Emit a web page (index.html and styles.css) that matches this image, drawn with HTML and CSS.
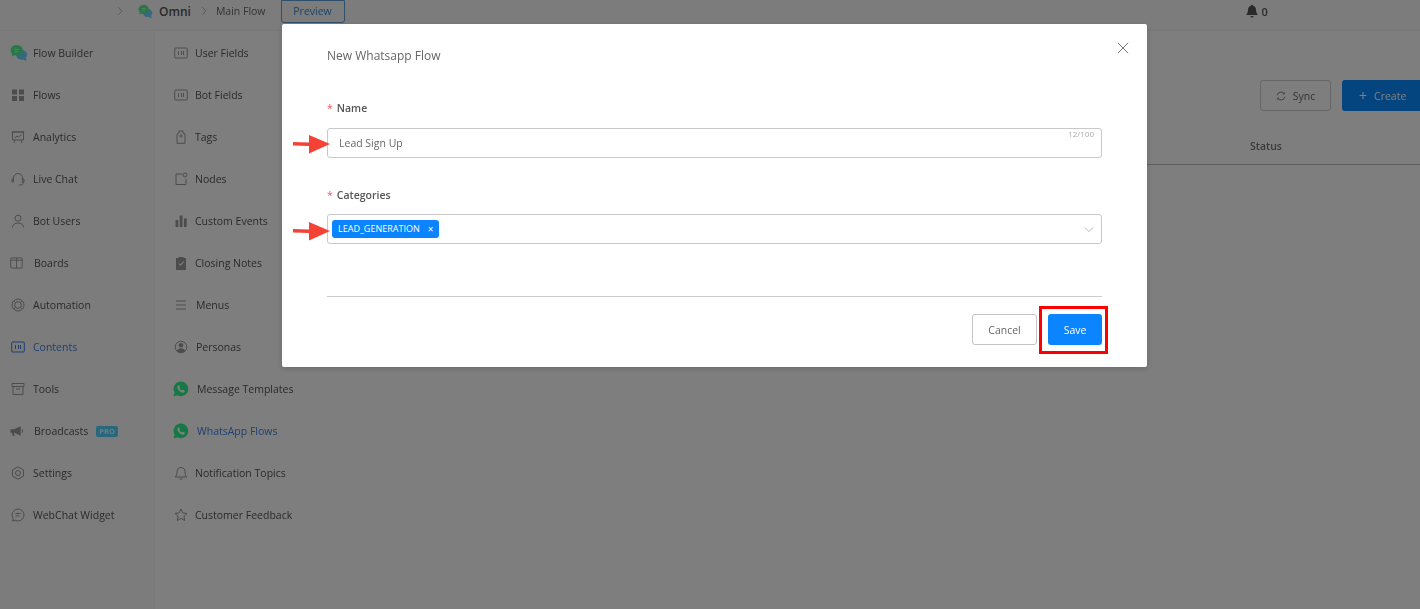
FILE: index.html
```html
<!DOCTYPE html>
<html lang="en">
<head>
<meta charset="utf-8">
<title>New Whatsapp Flow</title>
<link rel="stylesheet" href="styles.css">
</head>
<body>
<svg class="defs" width="0" height="0" aria-hidden="true">
  <symbol id="bubbles" viewBox="0 0 20 20">
    <path fill="#70d0ff" d="M12 6.500a6 5.500 0 0 1 5.500 9l1 3.500-4-1.800A6 5.500 0 1 1 12 6.500z"/>
    <path fill="#50f090" d="M7.500 1a6.800 6 0 0 1 0 12q-1.300 0-2.400-.4L1.800 14l.6-3A6.800 6 0 0 1 7.500 1z"/>
    <path stroke="#dff3e3" stroke-width="1" d="M5 6h5M5 8.500h4"/>
  </symbol>
  <symbol id="field" viewBox="0 0 14 14">
    <rect x=".7" y="2" width="12.600" height="10" rx="1" fill="none" stroke="currentColor"/>
    <path fill="none" stroke="currentColor" d="M4.500 5v4M7.500 5v4M9.500 5v4"/>
  </symbol>
  <symbol id="whatsapp" viewBox="0 0 16 16">
    <path fill="#2cf088" d="M8 .6a7.300 7.300 0 0 1 0 14.600c-1.300 0-2.500-.3-3.600-.9L.5 15.400l1.100-3.800A7.300 7.300 0 0 1 8 .6z"/>
    <path fill="#fff" d="M5.700 4.200c.3 0 .5 0 .6.300l.6 1.400c.1.200 0 .4-.1.600l-.5.600c.6 1.100 1.400 1.900 2.600 2.500l.7-.8c.1-.2.300-.2.500-.1l1.400.7c.2.100.3.300.3.500-.1 1.200-1 1.800-2 1.800-2.700-.3-5.300-3-5.500-5.500 0-1.100.6-2 1.400-2z"/>
  </symbol>
</svg>

<div class="page">
  <header class="topbar">
    <svg class="crumb-chev first" viewBox="0 0 8 12"><path d="M1.500 1l5 5-5 5"/></svg>
    <svg class="brand-icon"><use href="#bubbles"/></svg>
    <span class="brand">Omni</span>
    <svg class="crumb-chev" viewBox="0 0 8 12"><path d="M1.500 1l5 5-5 5"/></svg>
    <span class="crumb">Main Flow</span>
    <span class="preview">Preview</span>
    <span class="bell">
      <svg class="bell-icon" viewBox="0 0 14 14"><path fill="currentColor" d="M7 .8c.6 0 1 .4 1 .9 2 .5 3 2.100 3 4.100 0 2 .5 3.200 1.500 4.400v.8h-11v-.8C2.500 9 3 7.800 3 5.800c0-2 1-3.600 3-4.100 0-.5.400-.9 1-.9zM5.500 12h3a1.500 1.500 0 0 1-3 0z"/></svg>
      0
    </span>
  </header>

  <div class="body">
    <nav class="nav primary">
      <a class="item"><span class="ic"><svg class="i18"><use href="#bubbles"/></svg></span>Flow Builder</a>
      <a class="item"><span class="ic"><svg class="i14" viewBox="0 0 14 14"><path fill="currentColor" d="M1 1.500h5v5H1zM8 1.500h5v5H8zM1 8h5v5H1zM8 8h5v5H8z"/></svg></span>Flows</a>
      <a class="item"><span class="ic"><svg class="i14 line" viewBox="0 0 14 14"><path d="M1.500 2h11v8h-11zM.8 2h12.400M4 10l-1 3M10 10l1 3M3.500 8l2.500-2 1.500 1L10.500 4.500"/></svg></span>Analytics</a>
      <a class="item"><span class="ic"><svg class="i14 line" viewBox="0 0 14 14"><path d="M2.500 8V6a4.500 4.500 0 0 1 9 0v2M1 7h1.500v3H1zM11.500 7H13v3h-1.500zM12 10v1.500c0 .8-1 1.500-2 1.500H8"/></svg></span>Live Chat</a>
      <a class="item"><span class="ic"><svg class="i14 line" viewBox="0 0 14 14"><circle cx="7" cy="4.200" r="3"/><path d="M1.500 13.500c0-3 2.500-4.500 5.500-4.500s5.500 1.500 5.500 4.500"/></svg></span>Bot Users</a>
      <a class="item"><span class="ic"><svg class="i14 wide line" viewBox="0 0 14 14"><rect x=".8" y="1.500" width="12.400" height="11" rx="1"/><path d="M7 1.500v11M.8 4h12.400"/></svg></span><span class="shift">Boards</span></a>
      <a class="item"><span class="ic"><svg class="i14 line" viewBox="0 0 14 14"><circle cx="7" cy="7" r="6"/><circle cx="7" cy="7" r="3.300"/><path d="M3 3l1.800 1.800M11 3L9.200 4.800M3 11l1.800-1.800M11 11L9.200 9.200"/></svg></span>Automation</a>
      <a class="item active"><span class="ic"><svg class="i14"><use href="#field"/></svg></span>Contents</a>
      <a class="item"><span class="ic"><svg class="i14 line" viewBox="0 0 14 14"><path d="M1 1.500h12v3H1zM2 4.500v8h10v-8M5 7h4"/></svg></span>Tools</a>
      <a class="item"><span class="ic"><svg class="i14 wide" viewBox="0 0 14 14"><path fill="currentColor" d="M.5 5h4l7-3v10l-7-3H4l1 3.500H3L2 9H.5z"/><path fill="none" stroke="currentColor" d="M12.500 5.500h1v3h-1"/></svg></span><span class="shift">Broadcasts</span><span class="pro">PRO</span></a>
      <a class="item"><span class="ic"><svg class="i14 line" viewBox="0 0 14 14"><path d="M7 .8l5.500 3.100v6.200L7 13.200l-5.500-3.100V3.900z"/><circle cx="7" cy="7" r="2.500"/></svg></span>Settings</a>
      <a class="item"><span class="ic"><svg class="i14 line" viewBox="0 0 14 14"><path d="M7 1a6 6 0 1 1-2.800 11.300L1.500 13l.7-2.400A6 6 0 0 1 7 1zM4.500 5.500h5M4.500 8h4"/></svg></span>WebChat Widget</a>
    </nav>

    <nav class="nav secondary">
      <a class="item"><span class="ic"><svg class="i14"><use href="#field"/></svg></span>User Fields</a>
      <a class="item"><span class="ic"><svg class="i14"><use href="#field"/></svg></span>Bot Fields</a>
      <a class="item"><span class="ic"><svg class="i14 line" viewBox="0 0 14 14"><path d="M3 4l2-1V1h4v2l2 1v9.300H3z"/><circle cx="7" cy="6" r="1.100"/></svg></span>Tags</a>
      <a class="item"><span class="ic"><svg class="i14 line" viewBox="0 0 14 14"><path d="M8 2H2v10.500h10V7"/><circle cx="11" cy="3" r="2"/></svg></span>Nodes</a>
      <a class="item"><span class="ic"><svg class="i14" viewBox="0 0 14 14"><path fill="currentColor" d="M1.500 6h2.800v7H1.500zM5.700 1.500h2.800V13H5.700zM9.900 4.500h2.800V13H9.900z"/></svg></span>Custom Events</a>
      <a class="item"><span class="ic"><svg class="i14" viewBox="0 0 14 14"><path fill="currentColor" fill-rule="evenodd" d="M2 2h2.500V1h5v1H12v12H2zM4.500 8l2 2 3.500-4-.8-.7-2.700 3.200-1.200-1.200z"/></svg></span>Closing Notes</a>
      <a class="item"><span class="ic"><svg class="i14 line" viewBox="0 0 14 14"><path d="M2 3h10M2 7h10M2 11h10"/></svg></span><span class="nudge">Menus</span></a>
      <a class="item"><span class="ic"><svg class="i14" viewBox="0 0 14 14"><circle cx="7" cy="7" r="5.800" fill="none" stroke="currentColor"/><circle cx="7" cy="5.300" r="2.300" fill="currentColor"/><path fill="currentColor" d="M2.900 11c.6-2 2.300-2.800 4.100-2.800s3.500.8 4.100 2.800A5.800 5.800 0 0 1 2.900 11z"/></svg></span><span class="nudge">Personas</span></a>
      <a class="item"><span class="ic"><svg class="i16"><use href="#whatsapp"/></svg></span><span class="nudge wa">Message Templates</span></a>
      <a class="item active"><span class="ic"><svg class="i16"><use href="#whatsapp"/></svg></span><span class="nudge wa">WhatsApp Flows</span></a>
      <a class="item"><span class="ic"><svg class="i14 line" viewBox="0 0 14 14"><path d="M7 1.500c2.500 0 4 1.800 4 4.300 0 2.500.5 4 1.800 5.200H1.200C2.500 9.800 3 8.300 3 5.800c0-2.500 1.500-4.300 4-4.300zM5.500 13h3"/></svg></span>Notification Topics</a>
      <a class="item"><span class="ic"><svg class="i14 line" viewBox="0 0 14 14"><path d="M7 1l1.800 3.900 4.200.5-3.100 2.900.8 4.200L7 10.400l-3.700 2.100.8-4.200L1 5.400l4.200-.5z"/></svg></span>Customer Feedback</a>
    </nav>

    <main class="content">
      <div class="actions">
        <span class="btn-sync"><svg class="i10 line" viewBox="0 0 12 12"><path d="M1.500 5a4.500 4.500 0 0 1 8-2M10.500 7a4.500 4.500 0 0 1-8 2"/><path d="M8.500 3.500h1.500V1.500M3.500 8.500H2v2"/></svg>Sync</span>
        <span class="btn-create"><span class="plus">+</span>Create</span>
      </div>
      <div class="table-head"><span>Status</span></div>
    </main>
  </div>
</div>

<div class="mask">
  <section class="modal">
    <button class="close" aria-label="Close"><svg viewBox="0 0 12 12"><path d="M.8.800l10.400 10.400M11.200.800L.8 11.200"/></svg></button>
    <h1 class="modal-title">New Whatsapp Flow</h1>

    <div class="field name-field">
      <label class="label"><span class="req">*</span>Name</label>
      <div class="control">
        <span class="value">Lead Sign Up</span>
        <span class="count">12/100</span>
      </div>
    </div>

    <div class="field cat-field">
      <label class="label"><span class="req">*</span>Categories</label>
      <div class="control select">
        <span class="tag">LEAD_GENERATION<span class="tag-x">×</span></span>
        <svg class="select-chev" viewBox="0 0 12 8"><path d="M1 1.500l5 5 5-5"/></svg>
      </div>
    </div>

    <div class="divider"></div>

    <div class="footer">
      <span class="btn-cancel">Cancel</span>
      <span class="btn-save">Save</span>
    </div>

    <svg class="arrow arrow-name" viewBox="0 0 38 20"><path d="M0 8l16 .5V1l21 9-21 9.500V12L0 11.500z"/></svg>
    <svg class="arrow arrow-cat" viewBox="0 0 38 20"><path d="M0 8l16 .5V1l21 9-21 9.500V12L0 11.500z"/></svg>
    <span class="highlight"></span>
  </section>
</div>
</body>
</html>
```

FILE: styles.css
```css
* { box-sizing: border-box; }
html, body { margin: 0; height: 100%; }
body {
  font-family: "Open Sans", "Noto Sans", sans-serif;
  font-size: 10.500px;
  color: #333;
  background: #fff;
  overflow: hidden;
}
.defs { position: absolute; }

.page { height: 609px; display: flex; flex-direction: column; filter: blur(.35px); background: #fcfcfc; }

.topbar {
  height: 31px;
  flex: none;
  display: flex;
  align-items: center;
  padding: 0 0 8px 117px;
  border-bottom: 1px solid #eee;
  background: #f8f8f8;
}
.crumb-chev { width: 6px; height: 10px; fill: none; stroke: #999; stroke-width: 1; flex: none; }
.crumb-chev.first { margin-right: 15px; }
.brand-icon { width: 15px; height: 15px; margin-right: 6px; }
.brand { font-size: 12px; font-weight: 600; color: #555; margin-right: 10px; }
.crumb { color: #666; margin-left: 9px; margin-right: 15px; }
.preview {
  width: 64px; height: 23px;
  display: flex; align-items: center; justify-content: center;
  border: 1px solid #5fa0d8; border-radius: 0 0 3px 3px;
  color: #3a86d0;
}
.bell { margin-left: 900px; display: flex; align-items: center; gap: 3px; font-weight: 600; color: #555; font-size: 11px; }
.bell-icon { width: 14px; height: 14px; }

.body { flex: 1; display: flex; min-height: 0; }
.nav { display: flex; flex-direction: column; padding-top: 1px; }
.primary { width: 155px; background: #f8f8f8; border-right: 1px solid #f0f0f0; flex: none; }
.secondary { width: 160px; flex: none; }
.item {
  height: 42px;
  display: flex;
  align-items: center;
  padding-left: 10px;
  color: #555;
  white-space: nowrap;
}
.secondary .item { padding-left: 18px; }
.item.active { color: #3f7fe0; }
.ic { width: 23px; display: flex; align-items: center; color: #999; }
.active .ic { color: #3f7fe0; }
.secondary .ic { width: 22px; }
.i18 { width: 18px; height: 18px; margin-top: -1px; }
.i14 { width: 14px; height: 14px; margin-left: 1px; }
.i14.wide { margin-left: 0; width: 13px; }
.i16 { width: 16px; height: 16px; }
.i10 { width: 10px; height: 10px; }
.line { fill: none; stroke: currentColor; stroke-width: 1; }
.shift { margin-left: 1px; }
.nudge { margin-left: 1px; }
.nudge.wa { margin-left: 2px; }
.pro {
  margin-left: 8px;
  padding: 0 3px;
  height: 11px;
  line-height: 11px;
  border-radius: 2px;
  background: #50d0ff;
  color: #e8f2fb;
  font-size: 7.500px;
  font-weight: 700;
}

.content { flex: 1; min-width: 0; display: flex; flex-direction: column; }
.actions {
  display: flex;
  justify-content: flex-end;
  gap: 11px;
  padding-top: 49px;
}
.btn-sync {
  width: 71px; height: 31px;
  display: flex; align-items: center; justify-content: center; gap: 7px;
  border: 1px solid #ccc; border-radius: 3px;
  color: #666;
}
.btn-create {
  width: 78px; height: 31px;
  display: flex; align-items: center; padding-left: 17px; gap: 7px;
  background: #0a8aff; color: #fff;
  border-radius: 3px 0 0 3px;
}
.plus { font-size: 14px; line-height: 1; }
.table-head {
  height: 38px;
  margin-top: 16px;
  padding-left: 935px;
  display: flex; align-items: center;
  border-bottom: 1px solid #bbb;
  color: #777;
  font-weight: 600;
}

.mask {
  position: fixed; inset: 0;
  background: rgba(0, 0, 0, .5);
  padding: 24px 0 0 282px;
}
.modal {
  position: relative;
  width: 865px;
  height: 343px;
  background: #fff;
  border-radius: 2px;
  padding: 0 45px;
  box-shadow: 0 2px 6px rgba(0, 0, 0, .15);
}
.close {
  position: absolute; top: 18px; right: 18px;
  width: 12px; height: 12px; padding: 0;
  background: none; border: 0;
}
.close svg { display: block; fill: none; stroke: #777; stroke-width: 1; }
.modal-title {
  margin: 0;
  padding-top: 23px;
  height: 56px;
  font-size: 12px;
  line-height: 18px;
  font-weight: 400;
  color: #666;
}
.field { display: flex; flex-direction: column; }
.label {
  height: 28px;
  line-height: 17px;
  font-weight: 600;
  font-size: 10.500px;
  color: #555;
  margin-top: 20px;
}
.req { color: #f5515f; margin-right: 4px; font-weight: 400; }
.cat-field { margin-top: 29px; }
.cat-field .label { margin-top: 0; height: 27px; }
.control {
  position: relative;
  height: 30px;
  display: flex;
  align-items: center;
  padding-left: 11px;
  border: 1px solid #c9c9c9;
  border-radius: 3px;
}
.value { color: #666; font-size: 10.500px; }
.count {
  position: absolute; top: -1px; right: 7px;
  font-size: 8px; line-height: 11px; color: #aaa;
}
.select { padding-left: 4px; }
.tag {
  height: 18px;
  margin-top: -1px;
  display: flex; align-items: center;
  padding: 0 6px;
  background: #0a84ff;
  color: #fff;
  font-size: 9px;
  border-radius: 3px;
}
.tag-x { margin-left: 8px; font-size: 10px; line-height: 1; }
.select-chev {
  position: absolute; right: 7px; top: 11px;
  width: 10px; height: 7px;
  fill: none; stroke: #aaa; stroke-width: 1;
}
.divider { height: 1px; background: #ccc; margin-top: 52px; }
.footer {
  display: flex; justify-content: flex-end; gap: 11px;
  padding-top: 17px;
}
.btn-cancel, .btn-save {
  height: 31px;
  display: flex; align-items: center; justify-content: center;
  border-radius: 3px;
}
.btn-cancel { width: 65px; border: 1px solid #c4c4c4; color: #666; }
.btn-save { width: 54px; background: #0a84ff; color: #fff; }

.arrow { position: absolute; width: 38px; height: 20px; fill: #f44336; }
.arrow-name { left: 11px; top: 110px; }
.arrow-cat { left: 11px; top: 197px; }
.highlight {
  position: absolute;
  left: 757px; top: 282px;
  width: 69px; height: 48px;
  border: 3px solid #f00;
}
```
